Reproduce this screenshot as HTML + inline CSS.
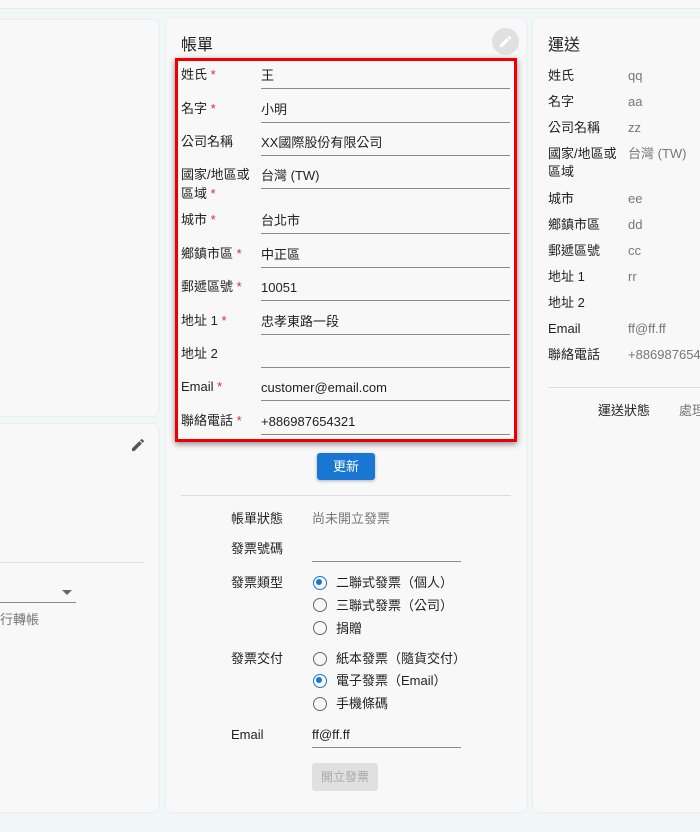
<!DOCTYPE html>
<html><head><meta charset="utf-8"><style>
*{margin:0;padding:0;box-sizing:border-box}
body{width:700px;height:832px;background:#f1f6f7;font-family:"Liberation Sans","Noto Sans CJK TC",sans-serif;font-size:13px;line-height:16px;color:#222;position:relative;overflow:hidden}
.a{position:absolute;white-space:nowrap;line-height:16px}
.card{position:absolute;background:#f8f8f8;border-radius:5px;box-shadow:0 0 2px rgba(0,0,0,.08)}
.l{position:absolute;left:181px;line-height:16px;white-space:nowrap}
.r{color:#d32f2f}
.u{position:absolute;left:261px;width:249px;height:1px;background:#8a8a8a}
.v{position:absolute;left:261px;line-height:16px;white-space:nowrap}
.g{color:#777}
.rad{position:absolute;left:313px;width:14px;height:14px;border:1.6px solid #666;border-radius:50%}
.rad.on{border-color:#1976d2}
.rad.on:after{content:"";position:absolute;left:2.4px;top:2.4px;width:6px;height:6px;border-radius:50%;background:#1976d2}
</style></head><body>
<div class="a" style="left:0;top:0;width:700px;height:9px;background:#f8f8f8;border-bottom:1px solid #e6eaec"></div>
<div class="card" style="left:-5px;top:20px;width:163px;height:396px"></div>
<div class="card" style="left:-5px;top:424px;width:163px;height:388px"></div>
<div class="card" style="left:166px;top:18px;width:360px;height:794px"></div>
<div class="card" style="left:533px;top:18px;width:180px;height:794px"></div>

<!-- left lower -->
<svg class="a" style="left:130px;top:437px" width="16" height="16" viewBox="0 0 24 24"><path fill="#555" d="M3 17.25V21h3.75L17.81 9.94l-3.75-3.75L3 17.25zM20.71 7.04a1 1 0 000-1.41l-2.34-2.34a1 1 0 00-1.41 0l-1.83 1.83 3.75 3.75 1.83-1.83z"/></svg>
<div class="a" style="left:0;top:562px;width:144px;height:1px;background:#ddd"></div>
<div class="a" style="left:62px;top:590px;width:0;height:0;border-left:5px solid transparent;border-right:5px solid transparent;border-top:5px solid #666"></div>
<div class="a" style="left:0;top:602px;width:76px;height:1px;background:#8a8a8a"></div>
<div class="a g" style="left:0;top:612px">行轉帳</div>

<!-- middle -->
<div class="a" style="left:181px;top:36px;font-size:16px;line-height:20px;color:#222">帳單</div>
<div class="a" style="left:492px;top:28px;width:27px;height:27px;border-radius:50%;background:#e0e0e0"></div>
<svg class="a" style="left:498px;top:34px" width="15" height="15" viewBox="0 0 24 24"><path fill="#fff" d="M3 17.25V21h3.75L17.81 9.94l-3.75-3.75L3 17.25zM20.71 7.04a1 1 0 000-1.41l-2.34-2.34a1 1 0 00-1.41 0l-1.83 1.83 3.75 3.75 1.83-1.83z"/></svg>
<div class="a" style="left:175px;top:58px;width:342px;height:384px;border:3px solid #e00;box-shadow:0 2px 6px rgba(0,0,0,.45)"></div>

<div class="l" style="top:67px">姓氏 <span class="r">*</span></div><div class="v" style="top:68px">王</div><div class="u" style="top:88px"></div>
<div class="l" style="top:101px">名字 <span class="r">*</span></div><div class="v" style="top:102px">小明</div><div class="u" style="top:122px"></div>
<div class="l" style="top:134px">公司名稱</div><div class="v" style="top:135px">XX國際股份有限公司</div><div class="u" style="top:155px"></div>
<div class="l" style="top:167px">國家/地區或</div><div class="l" style="top:186px">區域 <span class="r">*</span></div><div class="v" style="top:168px">台灣 (TW)</div><div class="u" style="top:188px"></div>
<div class="l" style="top:212px">城市 <span class="r">*</span></div><div class="v" style="top:213px">台北市</div><div class="u" style="top:233px"></div>
<div class="l" style="top:246px">鄉鎮市區 <span class="r">*</span></div><div class="v" style="top:247px">中正區</div><div class="u" style="top:267px"></div>
<div class="l" style="top:279px">郵遞區號 <span class="r">*</span></div><div class="v" style="top:280px">10051</div><div class="u" style="top:300px"></div>
<div class="l" style="top:313px">地址 1 <span class="r">*</span></div><div class="v" style="top:314px">忠孝東路一段</div><div class="u" style="top:334px"></div>
<div class="l" style="top:346px">地址 2</div><div class="u" style="top:367px"></div>
<div class="l" style="top:379px">Email <span class="r">*</span></div><div class="v" style="top:380px">customer@email.com</div><div class="u" style="top:400px"></div>
<div class="l" style="top:413px">聯絡電話 <span class="r">*</span></div><div class="v" style="top:414px">+886987654321</div><div class="u" style="top:434px"></div>

<div class="a" style="left:317px;top:453px;width:58px;height:27px;background:#1976d2;border-radius:3px;color:#fff;text-align:center;line-height:27px;box-shadow:0 1px 3px rgba(0,0,0,.3)">更新</div>
<div class="a" style="left:181px;top:495px;width:330px;height:1px;background:#ddd"></div>

<div class="a" style="left:231px;top:511px">帳單狀態</div><div class="a g" style="left:312px;top:511px">尚未開立發票</div>
<div class="a" style="left:231px;top:541px">發票號碼</div><div class="a" style="left:312px;top:561px;width:149px;height:1px;background:#8a8a8a"></div>
<div class="a" style="left:231px;top:575px">發票類型</div>
<div class="rad on" style="top:576px"></div><div class="a" style="left:336px;top:575px">二聯式發票（個人）</div>
<div class="rad" style="top:598px"></div><div class="a" style="left:336px;top:598px">三聯式發票（公司）</div>
<div class="rad" style="top:621px"></div><div class="a" style="left:336px;top:621px">捐贈</div>
<div class="a" style="left:231px;top:651px">發票交付</div>
<div class="rad" style="top:652px"></div><div class="a" style="left:336px;top:651px">紙本發票（隨貨交付）</div>
<div class="rad on" style="top:674px"></div><div class="a" style="left:336px;top:673px">電子發票（Email）</div>
<div class="rad" style="top:697px"></div><div class="a" style="left:336px;top:696px">手機條碼</div>
<div class="a" style="left:231px;top:727px">Email</div><div class="a" style="left:312px;top:727px">ff@ff.ff</div>
<div class="a" style="left:312px;top:747px;width:149px;height:1px;background:#8a8a8a"></div>
<div class="a" style="left:312px;top:763px;width:66px;height:28px;background:#e0e0e0;border-radius:3px;color:#a8a8a8;text-align:center;line-height:28px;font-size:12px">開立發票</div>

<!-- right -->
<div class="a" style="left:548px;top:36px;font-size:16px;line-height:20px">運送</div>
<div class="a" style="left:548px;top:68px">姓氏</div><div class="a g" style="left:628px;top:68px">qq</div>
<div class="a" style="left:548px;top:94px">名字</div><div class="a g" style="left:628px;top:94px">aa</div>
<div class="a" style="left:548px;top:120px">公司名稱</div><div class="a g" style="left:628px;top:120px">zz</div>
<div class="a" style="left:548px;top:146px">國家/地區或</div><div class="a" style="left:548px;top:164px">區域</div><div class="a g" style="left:628px;top:146px">台灣 (TW)</div>
<div class="a" style="left:548px;top:191px">城市</div><div class="a g" style="left:628px;top:191px">ee</div>
<div class="a" style="left:548px;top:217px">鄉鎮市區</div><div class="a g" style="left:628px;top:217px">dd</div>
<div class="a" style="left:548px;top:243px">郵遞區號</div><div class="a g" style="left:628px;top:243px">cc</div>
<div class="a" style="left:548px;top:269px">地址 1</div><div class="a g" style="left:628px;top:269px">rr</div>
<div class="a" style="left:548px;top:295px">地址 2</div>
<div class="a" style="left:548px;top:321px">Email</div><div class="a g" style="left:628px;top:321px">ff@ff.ff</div>
<div class="a" style="left:548px;top:347px">聯絡電話</div><div class="a g" style="left:628px;top:347px">+886987654321</div>
<div class="a" style="left:548px;top:387px;width:152px;height:1px;background:#ddd"></div>
<div class="a" style="left:598px;top:403px">運送狀態</div><div class="a g" style="left:679px;top:403px">處理中</div>
</body></html>
